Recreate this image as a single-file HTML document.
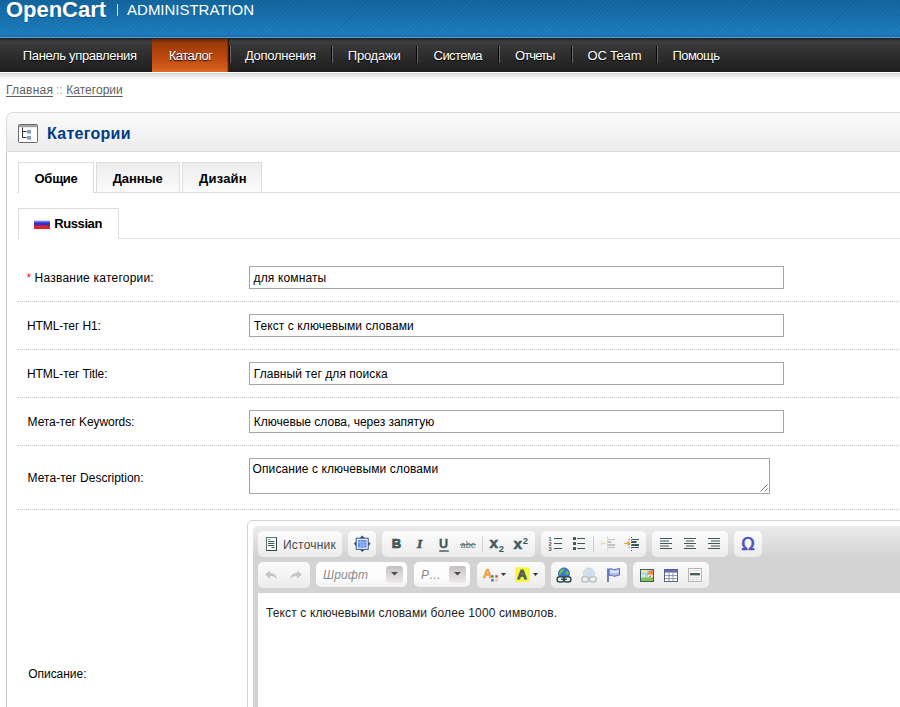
<!DOCTYPE html>
<html lang="ru">
<head>
<meta charset="utf-8">
<title>Категории</title>
<style>
*{box-sizing:border-box;}
html,body{margin:0;padding:0;}
body{width:900px;height:707px;overflow:hidden;background:#fff;font-family:"Liberation Sans",Arial,Helvetica,sans-serif;font-size:12px;color:#000;position:relative;}
#page{position:absolute;left:0;top:0;width:1200px;height:707px;overflow:hidden;}
.t{position:absolute;white-space:nowrap;display:block;}
.a{position:absolute;}
#header{position:absolute;left:0;top:0;width:1200px;height:38px;
 background:
  repeating-linear-gradient(135deg,rgba(255,255,255,0.03) 0,rgba(255,255,255,0.03) 1.5px,rgba(0,0,0,0.025) 1.5px,rgba(0,0,0,0.025) 3px),
  linear-gradient(to bottom,#10639c 0%,#1571ae 55%,#187dc0 88%,#1670ad 96%,#5d9bc9 97.5%,#5d9bc9 100%);
}
#menu{position:absolute;left:0;top:38px;width:1200px;height:34px;background:linear-gradient(to bottom,#1f2328 0px,#262a2e 1.5px,#3c3c3c 3px,#2e2e2e 50%,#1d1d1d 100%);}
.sep{position:absolute;top:46px;width:2px;height:17px;background:linear-gradient(to right,#050505 0,#050505 1px,#686868 1px,#686868 2px);}
#sel{position:absolute;left:152px;top:39px;width:77px;height:33px;background:linear-gradient(to right,rgba(0,0,0,0) 0,rgba(0,0,0,0) 75px,rgba(0,0,0,.45) 76px,rgba(0,0,0,.8) 77px),linear-gradient(to bottom,#6a2806 0%,#983a0a 12%,#b8470e 50%,#cf5a18 85%,#dc6a26 100%);}
#shadow{position:absolute;left:0;top:73px;width:1200px;height:7px;background:linear-gradient(to bottom,rgba(0,0,0,0.17),rgba(0,0,0,0.08) 45%,rgba(0,0,0,0));}
#heading{position:absolute;left:6px;top:112px;width:1200px;height:40px;border:1px solid #dbdbdb;border-radius:7px 7px 0 0;background:linear-gradient(to bottom,#fafafa 0%,#f3f3f3 50%,#ececec 100%);}
#cborder{position:absolute;left:6px;top:152px;width:1px;height:600px;background:#ccc;}
.tab{position:absolute;height:30px;border:1px solid #ddd;border-bottom:none;background:linear-gradient(to bottom,#ededed 0%,#f4f4f4 50%,#fbfbfb 100%);}
.tab.on{background:#fff;height:31px;}
.tline{position:absolute;left:17px;width:1200px;height:1px;background:#ddd;}
.row{position:absolute;left:17px;width:1200px;height:1px;border-top:1px dotted #c4c4c4;}
.inp{position:absolute;left:249px;width:535px;height:23px;border:1px solid #a5a5a5;background:#fff;}
.menu{text-shadow:0 1px 1px #000;}
u{text-decoration:underline;text-underline-offset:2px;text-decoration-skip-ink:none;}
/* editor */
#cke{position:absolute;left:247px;top:520px;width:1100px;height:400px;border:1px solid #d3d3d3;border-radius:5px;background:#fff;}
#ckw{position:absolute;left:253px;top:526px;width:1100px;height:400px;border-radius:5px;background:#d3d3d3 linear-gradient(to bottom,#ebebeb 0px,#d3d3d3 32px,#d3d3d3 100%);}
#ckc{position:absolute;left:258px;top:593px;width:1100px;height:300px;background:#fff;}
.g{position:absolute;height:25px;border-radius:5px;background:linear-gradient(to bottom,#fbfbfb 0%,#f4f4f4 50%,#ebebeb 100%);}
.g1{top:531px;height:26px;} .g2{top:562px;height:26px;}
.cb{position:absolute;height:25px;top:562px;border-radius:5px;background:linear-gradient(to bottom,#fff 0%,#fdfdfd 60%,#f1f1f1 100%);}
.cbb{position:absolute;top:566px;width:17px;height:17px;border-radius:3px;background:linear-gradient(to bottom,#c7c0c0 0%,#dcd7d7 50%,#ece9e9 100%);}
.ts{position:absolute;width:1px;height:16px;top:536px;background:#cfcfcf;}
svg.i{position:absolute;width:16px;height:16px;overflow:visible;}
.r1{top:536px;} .r2{top:567px;}
</style>
</head>
<body>
<div id="page">
<div id="header"></div>

<span class="t" id="logo" style="left:6.00px;top:-4.02px;font:bold 22px 'Liberation Sans',Arial,sans-serif;line-height:28px;color:#fff;letter-spacing:-0.029px;text-shadow:0 1px 1px rgba(0,0,0,.25);">OpenCart</span>
<div class="a" style="left:117px;top:4px;width:1px;height:12px;background:#cfe3f1"></div>
<span class="t" id="admin" style="left:127.10px;top:-1.20px;font:15px 'Liberation Sans',Arial,sans-serif;line-height:21px;color:#fff;letter-spacing:-0.023px;">ADMINISTRATION</span>
<div id="menu"></div><div id="sel"></div>
<span class="t" id="m1" style="left:22.70px;top:45.60px;font:13px 'Liberation Sans',Arial,sans-serif;line-height:19px;color:#fff;letter-spacing:-0.313px;text-shadow:0 1px 1px #000;">Панель управления</span>
<span class="t" id="m2" style="left:168.80px;top:45.60px;font:13px 'Liberation Sans',Arial,sans-serif;line-height:19px;color:#fff;letter-spacing:-0.500px;text-shadow:0 1px 1px #000;">Каталог</span>
<span class="t" id="m3" style="left:244.90px;top:45.60px;font:13px 'Liberation Sans',Arial,sans-serif;line-height:19px;color:#fff;letter-spacing:-0.267px;text-shadow:0 1px 1px #000;">Дополнения</span>
<span class="t" id="m4" style="left:347.80px;top:45.60px;font:13px 'Liberation Sans',Arial,sans-serif;line-height:19px;color:#fff;letter-spacing:-0.233px;text-shadow:0 1px 1px #000;">Продажи</span>
<span class="t" id="m5" style="left:433.60px;top:45.60px;font:13px 'Liberation Sans',Arial,sans-serif;line-height:19px;color:#fff;letter-spacing:-0.567px;text-shadow:0 1px 1px #000;">Система</span>
<span class="t" id="m6" style="left:515.00px;top:45.60px;font:13px 'Liberation Sans',Arial,sans-serif;line-height:19px;color:#fff;letter-spacing:-0.900px;text-shadow:0 1px 1px #000;">Отчеты</span>
<span class="t" id="m7" style="left:587.60px;top:45.60px;font:13px 'Liberation Sans',Arial,sans-serif;line-height:19px;color:#fff;letter-spacing:-0.117px;text-shadow:0 1px 1px #000;">OC Team</span>
<span class="t" id="m8" style="left:672.40px;top:45.60px;font:13px 'Liberation Sans',Arial,sans-serif;line-height:19px;color:#fff;letter-spacing:-0.540px;text-shadow:0 1px 1px #000;">Помощь</span>
<div class="sep" style="left:229px"></div>
<div class="sep" style="left:331px"></div>
<div class="sep" style="left:416px"></div>
<div class="sep" style="left:498px"></div>
<div class="sep" style="left:571px"></div>
<div class="sep" style="left:656px"></div>
<div id="shadow"></div>
<span class="t" id="bc1" style="left:6.00px;top:80.84px;font:12px 'Liberation Sans',Arial,sans-serif;line-height:18px;color:#5f5f5f;letter-spacing:0.200px;"><u>Главная</u></span>
<span class="t" id="bc2" style="left:56.00px;top:80.84px;font:12px 'Liberation Sans',Arial,sans-serif;line-height:18px;color:#aaa;letter-spacing:0.000px;">::</span>
<span class="t" id="bc3" style="left:66.20px;top:80.84px;font:12px 'Liberation Sans',Arial,sans-serif;line-height:18px;color:#5f5f5f;letter-spacing:0.037px;"><u>Категории</u></span>
<div id="heading"></div><div id="cborder"></div>
<svg class="a" style="left:18px;top:124px" width="20" height="19" viewBox="0 0 20 19">
 <rect x="0.5" y="0.5" width="19" height="18" rx="1" fill="#fdfdfd" stroke="#6b6b6b"/>
 <rect x="1" y="1" width="18" height="2.2" fill="#a2a2a2"/>
 <path d="M4.5 3.5v10h4M4.5 7.5h4" stroke="#333" fill="none"/>
 <rect x="9" y="6" width="4" height="3.6" fill="#7e9cc4"/>
 <rect x="9" y="12" width="4" height="3.6" fill="#7e9cc4"/>
</svg>
<span class="t" id="h1" style="left:47.00px;top:123.46px;font:bold 16px 'Liberation Sans',Arial,sans-serif;line-height:22px;color:#003a88;letter-spacing:0.275px;">Категории</span>
<div class="tline" style="top:192px"></div>
<div class="tab on" style="left:18px;top:162px;width:76px"></div>
<div class="tab" style="left:96px;top:162px;width:84px"></div>
<div class="tab" style="left:182px;top:162px;width:80px"></div>
<span class="t" id="tb1" style="left:34.50px;top:169.00px;font:bold 13px 'Liberation Sans',Arial,sans-serif;line-height:19px;color:#000;letter-spacing:-0.250px;">Общие</span>
<span class="t" id="tb2" style="left:112.70px;top:169.00px;font:bold 13px 'Liberation Sans',Arial,sans-serif;line-height:19px;color:#000;letter-spacing:-0.080px;">Данные</span>
<span class="t" id="tb3" style="left:199.00px;top:169.00px;font:bold 13px 'Liberation Sans',Arial,sans-serif;line-height:19px;color:#000;letter-spacing:0.200px;">Дизайн</span>
<div class="tline" style="top:238px"></div>
<div class="tab on" style="left:18px;top:208px;width:101px"></div>
<svg class="a" style="left:34px;top:218px" width="16" height="11" viewBox="0 0 16 11">
 <defs><linearGradient id="fl" x1="0" y1="0" x2="0" y2="1"><stop offset="0" stop-color="#fff"/><stop offset=".2" stop-color="#f4f4fb"/><stop offset=".34" stop-color="#5a62e6"/><stop offset=".5" stop-color="#2b2fd0"/><stop offset=".62" stop-color="#3a2ab8"/><stop offset=".72" stop-color="#d2283c"/><stop offset="1" stop-color="#ee1c1c"/></linearGradient></defs>
 <rect width="16" height="11" fill="url(#fl)"/>
</svg>
<span class="t" id="lang" style="left:54.20px;top:214.00px;font:bold 13px 'Liberation Sans',Arial,sans-serif;line-height:19px;color:#000;letter-spacing:-0.400px;">Russian</span>
<span class="t" id="req" style="left:26.40px;top:268.54px;font:12px 'Liberation Sans',Arial,sans-serif;line-height:18px;color:#e8202a;letter-spacing:0.000px;">*</span>
<span class="t" id="l1" style="left:34.60px;top:268.54px;font:12px 'Liberation Sans',Arial,sans-serif;line-height:18px;color:#000;letter-spacing:0.222px;">Название категории:</span>
<div class="inp" style="top:266px"></div>
<span class="t" id="v1" style="left:253.60px;top:269.04px;font:12px 'Liberation Sans',Arial,sans-serif;line-height:18px;color:#000;letter-spacing:0.130px;">для комнаты</span>
<div class="row" style="top:301px"></div>
<span class="t" id="l2" style="left:27.00px;top:316.54px;font:12px 'Liberation Sans',Arial,sans-serif;line-height:18px;color:#000;letter-spacing:-0.109px;">HTML-тег H1:</span>
<div class="inp" style="top:314px"></div>
<span class="t" id="v2" style="left:253.80px;top:317.04px;font:12px 'Liberation Sans',Arial,sans-serif;line-height:18px;color:#000;letter-spacing:0.083px;">Текст с ключевыми словами</span>
<div class="row" style="top:349px"></div>
<span class="t" id="l3" style="left:27.00px;top:364.54px;font:12px 'Liberation Sans',Arial,sans-serif;line-height:18px;color:#000;letter-spacing:-0.107px;">HTML-тег Title:</span>
<div class="inp" style="top:362px"></div>
<span class="t" id="v3" style="left:253.80px;top:365.04px;font:12px 'Liberation Sans',Arial,sans-serif;line-height:18px;color:#000;letter-spacing:0.048px;">Главный тег для поиска</span>
<div class="row" style="top:397px"></div>
<span class="t" id="l4" style="left:27.60px;top:412.54px;font:12px 'Liberation Sans',Arial,sans-serif;line-height:18px;color:#000;letter-spacing:-0.082px;">Мета-тег Keywords:</span>
<div class="inp" style="top:410px"></div>
<span class="t" id="v4" style="left:253.80px;top:413.04px;font:12px 'Liberation Sans',Arial,sans-serif;line-height:18px;color:#000;letter-spacing:-0.011px;">Ключевые слова, через запятую</span>
<div class="row" style="top:445px"></div>
<span class="t" id="l5" style="left:27.60px;top:468.64px;font:12px 'Liberation Sans',Arial,sans-serif;line-height:18px;color:#000;letter-spacing:0.025px;">Мета-тег Description:</span>
<div class="inp" style="top:458px;width:521px;height:36px"></div>
<svg class="a" style="left:759px;top:483px" width="9" height="9" viewBox="0 0 9 9"><path d="M8.5 1.5l-7 7M8.5 5.5l-3 3" stroke="#777" stroke-width="1" fill="none"/></svg>
<span class="t" id="v5" style="left:252.60px;top:459.74px;font:12px 'Liberation Sans',Arial,sans-serif;line-height:18px;color:#000;letter-spacing:0.096px;">Описание с ключевыми словами</span>
<div class="row" style="top:509px"></div>
<span class="t" id="l6" style="left:28.20px;top:664.84px;font:12px 'Liberation Sans',Arial,sans-serif;line-height:18px;color:#000;letter-spacing:-0.025px;">Описание:</span>
<div id="cke"></div><div id="ckw"></div><div id="ckc"></div>
<span class="t" id="ed" style="left:266.00px;top:603.84px;font:12px 'Liberation Sans',Arial,sans-serif;line-height:18px;color:#222;letter-spacing:0.129px;">Текст с ключевыми словами более 1000 символов.</span>
<div class="g g1" style="left:258px;width:84px"></div>
<div class="g g1" style="left:348px;width:28px"></div>
<div class="g g1" style="left:382px;width:153px"></div>
<div class="g g1" style="left:541px;width:105px"></div>
<div class="g g1" style="left:652px;width:76px"></div>
<div class="g g1" style="left:734px;width:28px"></div>
<div class="g g2" style="left:258px;width:52px"></div>
<div class="g g2" style="left:477px;width:68px"></div>
<div class="g g2" style="left:551px;width:76px"></div>
<div class="g g2" style="left:633px;width:76px"></div>
<div class="cb" style="left:316px;width:91px"></div><div class="cbb" style="left:386px"></div>
<div class="cb" style="left:414px;width:56px"></div><div class="cbb" style="left:449px"></div>
<svg class="a" style="left:391px;top:572px" width="7" height="4" viewBox="0 0 7 4"><path d="M0 0h7l-3.500 3.500z" fill="#4a4a4a"/></svg>
<svg class="a" style="left:454px;top:572px" width="7" height="4" viewBox="0 0 7 4"><path d="M0 0h7l-3.500 3.500z" fill="#4a4a4a"/></svg>
<span class="t" id="src" style="left:283.00px;top:535.64px;font:12px 'Liberation Sans',Arial,sans-serif;line-height:18px;color:#4a4a4a;letter-spacing:0.214px;">Источник</span>
<span class="t" id="fnt" style="left:323.00px;top:565.84px;font:italic 12px 'Liberation Sans',Arial,sans-serif;line-height:18px;color:#8a8a8a;letter-spacing:0.125px;">Шрифт</span>
<span class="t" id="siz" style="left:421.00px;top:565.84px;font:italic 12px 'Liberation Sans',Arial,sans-serif;line-height:18px;color:#8a8a8a;letter-spacing:0.000px;">Р…</span>
<div class="ts" style="left:482px"></div><div class="ts" style="left:593px"></div>
<!-- source -->
<svg class="i r1" style="left:264px" viewBox="0 0 16 16">
 <rect x="2.5" y="1.5" width="10" height="13" fill="#fff" stroke="#5d7873"/>
 <path d="M12.5 1.5v13h-10" stroke="#2f4642" fill="none"/>
 <path d="M4 5.5h6.5M4 7.5h6.5M4 9.5h6.5M7.5 11.5h3" stroke="#3f5a56" fill="none"/>
 <path d="M4 3.5h2.5" stroke="#8aa19d" fill="none"/>
</svg>
<!-- maximize -->
<svg class="i r1" style="left:354px" viewBox="0 0 16 16">
 <path d="M8.200 -0.400l3.200 3.200h-6.400zM8.200 16l3.200-3.200h-6.400zM-0.200 7.800l3.200-3.200v6.400zM16.600 7.800l-3.200-3.200v6.400z" fill="#35525f"/>
 <rect x="2.200" y="2.200" width="12" height="11.200" fill="#f1f6ff" stroke="#3a5a82"/>
 <rect x="3.900" y="3.900" width="8.600" height="7.800" fill="#6b90ea"/>
 <path d="M3.900 6.400h8.600M6.700 3.900v7.800M9.700 6.400v5.300M6.700 9.200h5.800" stroke="#a9c0f7" stroke-width=".8" fill="none"/>
</svg>
<!-- bold / italic / underline / strike / sub / sup -->
<svg class="i r1" style="left:388px" viewBox="0 0 16 16"><text x="3.800" y="12.300" font-family="Liberation Sans, Arial, sans-serif" font-weight="bold" font-size="13" fill="#3d5858" stroke="#3d5858" stroke-width=".7">B</text></svg>
<svg class="i r1" style="left:412px" viewBox="0 0 16 16"><text x="5" y="12.400" font-family="Liberation Serif, Times New Roman, serif" font-weight="bold" font-style="italic" font-size="13.5" fill="#3d5858" stroke="#3d5858" stroke-width=".5">I</text></svg>
<svg class="i r1" style="left:436px" viewBox="0 0 16 16"><text x="3" y="12.4" font-family="Liberation Sans, Arial, sans-serif" font-weight="bold" font-size="12.6" fill="#3d5858" stroke="#3d5858" stroke-width=".3">U</text><rect x="3.2" y="14.3" width="9.6" height="1.4" fill="#3d5858"/></svg>
<svg class="i r1" style="left:460px" viewBox="0 0 16 16"><text x="0.6" y="11.6" font-family="Liberation Sans, Arial, sans-serif" font-size="8.8" fill="#587070" textLength="14.6" lengthAdjust="spacingAndGlyphs">abc</text><rect x="0" y="8.2" width="16" height="1" fill="#587070"/></svg>
<svg class="i r1" style="left:489px" viewBox="0 0 16 16"><text x="0.600" y="12.100" font-family="Liberation Sans, Arial, sans-serif" font-weight="bold" font-size="15.500" fill="#3d5858" stroke="#3d5858" stroke-width=".5">x</text><text x="9.800" y="15.600" font-family="Liberation Sans, Arial, sans-serif" font-weight="bold" font-size="9.400" fill="#3d5858">2</text></svg>
<svg class="i r1" style="left:513px" viewBox="0 0 16 16"><text x="0.600" y="13.100" font-family="Liberation Sans, Arial, sans-serif" font-weight="bold" font-size="15.500" fill="#3d5858" stroke="#3d5858" stroke-width=".5">x</text><text x="9.800" y="8.400" font-family="Liberation Sans, Arial, sans-serif" font-weight="bold" font-size="9.400" fill="#3d5858">2</text></svg>
<!-- numbered list -->
<svg class="i r1" style="left:548px" viewBox="0 0 16 16">
 <path d="M6 2.5h8M6 7.5h8M6 12.5h8" stroke="#3d5858" stroke-width="1.1" fill="none"/>
 <text x="0.6" y="5" font-family="Liberation Sans, Arial, sans-serif" font-weight="bold" font-size="5.6" fill="#3d5858">1</text>
 <text x="0.6" y="10" font-family="Liberation Sans, Arial, sans-serif" font-weight="bold" font-size="5.6" fill="#3d5858">2</text>
 <text x="0.6" y="15" font-family="Liberation Sans, Arial, sans-serif" font-weight="bold" font-size="5.6" fill="#3d5858">3</text>
</svg>
<!-- bullet list -->
<svg class="i r1" style="left:572px" viewBox="0 0 16 16">
 <path d="M5.2 2.5h7.8M5.2 7.5h7.8M5.2 12.5h7.8" stroke="#3d5858" stroke-width="1.1" fill="none"/>
 <rect x="1" y="1.1" width="3" height="2.9" fill="#3d5858"/><rect x="1" y="6.1" width="3" height="2.9" fill="#3d5858"/><rect x="1" y="11.1" width="3" height="2.9" fill="#3d5858"/>
</svg>
<!-- outdent (disabled) -->
<svg class="i r1" style="left:600px;opacity:.33" viewBox="0 0 16 16">
 <path d="M7.5 3.5h7.5M7.5 11.5h7.5" stroke="#4b6363" fill="none"/>
 <rect x="7.5" y="5" width="4" height="2" fill="#4b6363"/><rect x="7.5" y="8" width="7.5" height="2" fill="#4b6363"/>
 <path d="M7.5 1v14" stroke="#4b6363" stroke-dasharray="1 1.6" fill="none"/>
 <path d="M6 7.5h-5M3 5.5l-2 2 2 2" stroke="#e8a533" fill="none"/>
</svg>
<!-- indent -->
<svg class="i r1" style="left:624px" viewBox="0 0 16 16">
 <path d="M7.5 3.5h7.5M7.5 11.5h7.5" stroke="#3d5858" fill="none"/>
 <rect x="7.5" y="5" width="5" height="2" fill="#3d5858"/><rect x="7.5" y="8" width="7.5" height="2" fill="#3d5858"/>
 <path d="M7.5 1v14M5.2 3v10" stroke="#3d5858" stroke-dasharray="1 1.6" fill="none"/>
 <path d="M0 7.5h5.6M3.4 5.3l2.2 2.2-2.2 2.2" stroke="#efa12b" stroke-width="1.1" fill="none"/>
</svg>
<!-- align left/center/right -->
<svg class="i r1" style="left:658px" viewBox="0 0 16 16"><path d="M2 2.5h12M2 5h9M2 7.5h12M2 10h9M2 12.5h12" stroke="#3d5858" stroke-width="1" fill="none"/></svg>
<svg class="i r1" style="left:682px" viewBox="0 0 16 16"><path d="M2 2.5h12M4 5h8M2 7.5h12M4 10h8M2 12.5h12" stroke="#3d5858" stroke-width="1" fill="none"/></svg>
<svg class="i r1" style="left:706px" viewBox="0 0 16 16"><path d="M2 2.5h12M5 5h9M2 7.5h12M5 10h9M2 12.5h12" stroke="#3d5858" stroke-width="1" fill="none"/></svg>
<!-- omega -->
<svg class="i r1" style="left:740px" viewBox="0 0 16 16"><text x="1.500" y="14.300" font-family="DejaVu Sans, Liberation Sans, sans-serif" font-size="17" fill="#4a52c0" stroke="#4a52c0" stroke-width=".7">Ω</text></svg>
<!-- undo / redo (disabled) -->
<svg class="i r2" style="left:263px;opacity:.38" viewBox="0 0 16 16"><path d="M2 7.5l5-4v2.6c4 0 6.500 2 7 6.400c-1.500-2.500-3.500-3.400-7-3.400v2.600z" fill="#6f7f7f"/></svg>
<svg class="i r2" style="left:288px;opacity:.38" viewBox="0 0 16 16"><path d="M14 7.500l-5-4v2.600c-4 0-6.500 2-7 6.400c1.500-2.500 3.500-3.400 7-3.400v2.600z" fill="#6f7f7f"/></svg>
<!-- text color -->
<svg class="i r2" style="left:482px" viewBox="0 0 16 16">
 <defs><linearGradient id="tcg" x1="0" y1="0" x2="0" y2="1"><stop offset="0" stop-color="#f0b040"/><stop offset="1" stop-color="#e0906a"/></linearGradient></defs>
 <text x="0.900" y="11.200" font-family="Liberation Sans, Arial, sans-serif" font-weight="bold" font-size="12.600" fill="url(#tcg)" stroke="#eaa652" stroke-width=".7">A</text>
 <rect x="9.200" y="8.200" width="2.500" height="2.500" fill="#4f9a3e"/><rect x="13.300" y="8.200" width="2.500" height="2.500" fill="#d2553d"/>
 <rect x="9.200" y="12" width="2.500" height="2.500" fill="#3f72cc"/><rect x="13.300" y="12" width="2.500" height="2.500" fill="#ecc3a0"/>
</svg>
<svg class="a" style="left:501px;top:573px" width="5" height="3" viewBox="0 0 5 3"><path d="M0 0h5l-2.500 3z" fill="#333"/></svg>
<!-- bg color -->
<svg class="i r2" style="left:514px" viewBox="0 0 16 16">
 <rect x="1" y="0.400" width="14.800" height="14.400" fill="#f6f83a"/>
 <text x="3.300" y="12.300" font-family="Liberation Sans, Arial, sans-serif" font-weight="bold" font-size="13.200" fill="#555c5c" stroke="#555c5c" stroke-width="1">A</text>
</svg>
<svg class="a" style="left:533px;top:573px" width="5" height="3" viewBox="0 0 5 3"><path d="M0 0h5l-2.500 3z" fill="#333"/></svg>
<!-- link -->
<svg class="i r2" style="left:556px" viewBox="0 0 16 16">
 <circle cx="8" cy="6.400" r="5.500" fill="#3f74d6" stroke="#2c559f" stroke-width=".8"/>
 <path d="M3.500 4.500c1.200-2.500 3.200-3 4.500-2.500c.6 1.600-.8 2.600-1.800 3.600c-1 1-1.400 2.400-2.600 1.900c-.8-.8-.7-2-.1-3zM9.500 5c1-1.300 2.600-1.200 3.300-.300c.4 1.600-.6 3-2 3.300c-1.300 0-1.800-1.800-1.300-3z" fill="#5fc04e"/>
 <rect x="1.100" y="9.700" width="7" height="5.200" rx="2.500" fill="#eef4f4" stroke="#2f4d4d" stroke-width="1.500"/>
 <rect x="7.900" y="9.700" width="7" height="5.200" rx="2.500" fill="#eef4f4" stroke="#2f4d4d" stroke-width="1.500"/>
 <rect x="5" y="11.600" width="6" height="1.400" fill="#2f4d4d"/>
</svg>
<!-- unlink (disabled) -->
<svg class="i r2" style="left:581px;opacity:.3" viewBox="0 0 16 16">
 <circle cx="8" cy="6.400" r="5.500" fill="#7fa6e6" stroke="#5579b5" stroke-width=".8"/>
 <path d="M3.500 4.500c1.200-2.500 3.200-3 4.500-2.500c.6 1.600-.8 2.600-1.800 3.600c-1 1-1.400 2.400-2.600 1.900c-.8-.8-.7-2-.1-3z" fill="#8cc985"/>
 <rect x="0.800" y="9.700" width="6.600" height="5.200" rx="2.500" fill="#eef4f4" stroke="#3b5a6a" stroke-width="1.500"/>
 <rect x="8.600" y="9.700" width="6.600" height="5.200" rx="2.500" fill="#eef4f4" stroke="#3b5a6a" stroke-width="1.500"/>
</svg>
<!-- anchor flag -->
<svg class="i r2" style="left:605px" viewBox="0 0 16 16">
 <path d="M3 1.500v13.500" stroke="#5868ba" stroke-width="1.700" fill="none"/>
 <path d="M4 2c2.500-1.200 4 1 6 .6c1.500-.3 3-1 4.500-1.200v6.600c-1.500.2-3 .9-4.500 1.200c-2 .4-3.500-1.800-6-.6z" fill="#b0bde8" stroke="#5a6cc0" stroke-width="1"/>
 <path d="M5 3.400c2-.8 3.500.8 5 .6c1.200-.2 2.300-.6 3.500-.9v2.300c-3 .8-5.500 1-8.500.2z" fill="#dde4f8"/>
</svg>
<!-- image -->
<svg class="i r2" style="left:639px" viewBox="0 0 16 16">
 <rect x="1.500" y="2.500" width="13" height="12" fill="#a6dbef" stroke="#41605b"/>
 <rect x="2" y="3" width="6" height="2.400" fill="#f3e9a0"/>
 <path d="M8.500 5.800l2.500-2.500h3v5h-5.500z" fill="#ee8a44"/>
 <rect x="9" y="7.600" width="4.600" height="3" fill="#f8f4ea"/>
 <rect x="2" y="10.400" width="12" height="3.600" fill="#86c052"/>
 <rect x="2" y="7.400" width="4" height="3" fill="#c9e9f4"/>
 <rect x="10.400" y="8.600" width="1.400" height="1.400" fill="#c0502a"/>
</svg>
<!-- table -->
<svg class="i r2" style="left:663px" viewBox="0 0 16 16">
 <rect x="1.500" y="2.500" width="13" height="12" fill="#fff" stroke="#5a6282"/>
 <rect x="2" y="3" width="12" height="2.600" fill="#656eb2"/>
 <path d="M2 8.600h12M2 11.600h12M6 5.600v9M10 5.600v9" stroke="#8c94ae" stroke-width="1" fill="none"/>
</svg>
<!-- horizontal rule -->
<svg class="i r2" style="left:687px" viewBox="0 0 16 16">
 <rect x="1.500" y="1.500" width="13" height="13" fill="#fff" stroke="#b4b4b4"/>
 <path d="M3 3.800h10M3 10.600h10M3 12.600h10" stroke="#bdbdbd" stroke-width=".9" stroke-dasharray="1.500 .5" fill="none"/>
 <rect x="3" y="6" width="10" height="2.400" fill="#44605c"/>
</svg>

</div>
</body>
</html>
